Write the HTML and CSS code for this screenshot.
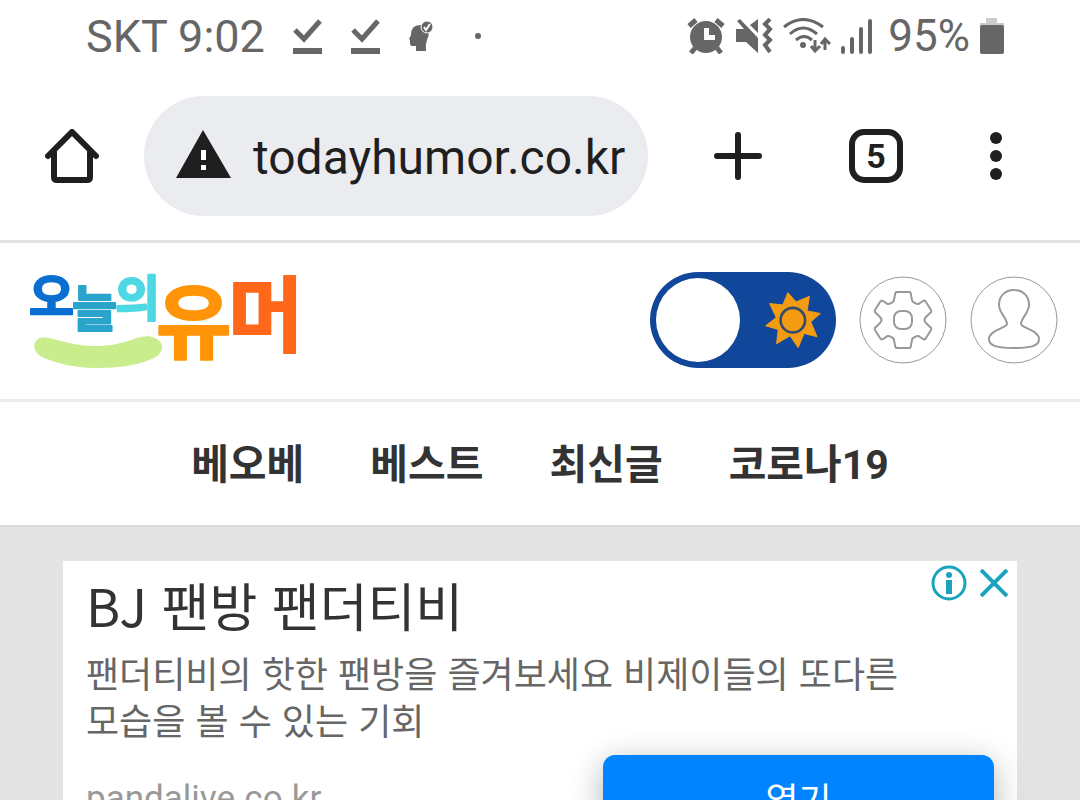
FILE: index.html
```
<!DOCTYPE html>
<html lang="ko">
<head>
	<meta charset="utf-8">
	<meta name="viewport" content="width=device-width, initial-scale=1">
	<title>오늘의유머</title>
	<link rel="stylesheet" href="styles.css">
</head>
<body>
<div class="status_bar">
	<div class="status_left">
		<span>SKT 9:02</span>
		<svg width="30" height="36" viewBox="0 0 30 36"><path d="M2 12l9 9L27 3" fill="none" stroke="#666" stroke-width="5"/><path d="M0 30h29v6H0z" fill="#666"/></svg>
		<svg width="30" height="36" viewBox="0 0 30 36"><path d="M2 12l9 9L27 3" fill="none" stroke="#666" stroke-width="5"/><path d="M0 30h29v6H0z" fill="#666"/></svg>
		<svg width="26" height="36" viewBox="0 0 26 36"><path d="M7 33v-5H3q-2 0-2-3v-3l-1-1 2-4Q2 7 11 7h5l4 6q0 5-2 9-2 5-1 11z" fill="#666"/><circle cx="18" cy="9" r="6" fill="#666" stroke="#fff" stroke-width="1"/><path d="M15 9l2 3 4-6" fill="none" stroke="#fff" stroke-width="2"/></svg>
		<i class="dot"></i>
	</div>
	<div class="status_right">
		<svg width="38" height="36" viewBox="0 0 38 36"><path d="M2 8l7-6M29 2l7 6M8 30l-4 5M30 30l4 5" stroke="#666" stroke-width="5"/><circle cx="19" cy="19" r="16" fill="#666"/><path d="M17 10h5v7h6v5H17z" fill="#fff"/></svg>
		<svg width="38" height="36" viewBox="0 0 38 36"><path d="M1 11h8L2 3l3-2 18 19v15L11 24H1zM15 7l8-6v14z" fill="#666"/><path d="M35 1l-5 5 5 5-5 6 5 5-5 5 5 7" fill="none" stroke="#666" stroke-width="4"/></svg>
		<svg width="48" height="36" viewBox="0 0 48 36"><path d="M1 9Q20-6 40 9M7 16Q20 4 34 16M13 22q8-7 16 0" fill="none" stroke="#666" stroke-width="3"/><circle cx="20" cy="27" r="3" fill="#666"/><path d="M32 22v11m-4-5l4 5 5-5M42 32V21m-4 5l4-5 5 5" fill="none" stroke="#666" stroke-width="3"/></svg>
		<svg width="31" height="36" viewBox="0 0 31 36"><path d="M2 30v4M11 21v13M20 11v23M29 3v31" stroke="#666" stroke-width="4" stroke-linecap="round"/></svg>
		<span class="battery_text">95%</span>
		<svg width="24" height="36" viewBox="0 0 24 36"><path d="M6 0h11v5h7v3H0V5h6z" fill="#ccc"/><rect y="7" width="24" height="29" rx="2" fill="#666"/></svg>
	</div>
</div>
<div class="toolbar">
	<button class="icon_button" aria-label="홈"><svg width="54" height="54" viewBox="0 0 54 54"><path d="M3 27L27 3l24 24M9 23v25q0 3 3 3h30q3 0 3-3V23" fill="none" stroke="#1f1f1f" stroke-width="6" stroke-linecap="round"/></svg></button>
	<div class="address">
		<svg width="55" height="54" viewBox="0 0 55 54"><path d="M27 0l28 48H0z" fill="#1f1f1f"/><path d="M25 20h5v10h-5zM25 35h5v5h-5z" fill="#fff"/></svg>
		<input type="text" class="url" value="todayhumor.co.kr" aria-label="주소">
	</div>
	<div class="actions">
		<button class="icon_button" aria-label="새 탭"><svg width="48" height="48" viewBox="0 0 48 48"><path d="M24 3v42M3 24h42" stroke="#1f1f1f" stroke-width="6" stroke-linecap="round"/></svg></button>
		<button class="tab_count">5</button>
		<button class="icon_button" aria-label="메뉴"><svg width="12" height="48" viewBox="0 0 12 48"><g fill="#1f1f1f"><circle cx="6" cy="6" r="6"/><circle cx="6" cy="24" r="6"/><circle cx="6" cy="42" r="6"/></g></svg></button>
	</div>
</div>
<header class="site_header">
	<a href="#" class="logo">
		<svg class="logo_image" width="280" height="104" viewBox="0 0 280 104">
			<path d="M10 71C4 75 5 84 14 89c16 7 34 11 54 11 24 0 42-3 56-9 12-5 14-16 3-21-6-3-14-2-24 2-22 8-44 7-62 3-14-3-24-8-31-4z" fill="#c9ec8c"/>
			<g class="logo_text">
				<text x="1" y="47" font-size="49" fill="#0a6fd0" stroke="#0a6fd0">오</text>
				<text x="44" y="59" font-size="49" fill="#2ba4cc" stroke="#2ba4cc">늘</text>
				<text x="87" y="48" font-size="49" fill="#4dd8e4" stroke="#4dd8e4">의</text>
				<text x="128" y="84" font-size="82" fill="#ff9408" stroke="#ff9408">유</text>
				<text x="200" y="77" font-size="82" fill="#ff681a" stroke="#ff681a">머</text>
			</g>
		</svg>
	</a>
	<div class="header_tools">
		<label class="theme_switch">
			<input type="checkbox" aria-label="다크 모드">
			<svg class="sun" width="58" height="58" viewBox="375 122 175 175"><path d="M447 127l25 28 40-17-7 44 40 8-29 25 19 45-39-10-18 43-24-36-41 24 5-43-38-11 32-25-20-42 40 4z" fill="#f39c12" stroke="#f39c12" stroke-width="3" stroke-linejoin="round"/><circle cx="462" cy="210" r="37" fill="#f39c12" stroke="#334c6c" stroke-width="8"/></svg>
		</label>
		<button class="icon_button" aria-label="설정"><svg width="88" height="88" viewBox="0 0 88 88"><g fill="none" stroke="#999"><circle cx="44" cy="44" r="43"/><path d="M38 16h12q2 0 2 3l1 5q0 2 3 3 3 2 5 0l3-2q2-1 3 1l5 8q1 2-1 3l-4 4q-3 3 0 6l4 4q2 1 1 3l-5 8q-1 2-3 1l-3-2q-2-2-5 0-3 1-3 3l-1 5q0 3-2 3H38q-2 0-2-3l-1-5q0-2-3-3-3-2-5 0l-3 2q-2 1-3-1l-5-8q-1-2 1-3l4-4q3-3 0-6l-4-4q-2-1-1-3l5-8q1-2 3-1l3 2q2 2 5 0 3-1 3-3l1-5q0-3 2-3z" stroke-width="2"/><rect x="35" y="35" width="18" height="18" rx="7" stroke-width="2"/></g></svg></button>
		<button class="icon_button" aria-label="내 정보"><svg width="88" height="88" viewBox="0 0 88 88"><g fill="none" stroke="#999"><circle cx="44" cy="44" r="43"/><path d="M44 14c-9 0-15 6-15 15 0 8 8 13 8 19 0 4-18 6-18 15 0 7 8 9 25 9s25-2 25-9c0-9-18-11-18-15 0-6 8-11 8-19 0-9-6-15-15-15z" stroke-width="2"/></g></svg></button>
	</div>
</header>
<nav class="menu">
	<a href="#">베오베</a>
	<a href="#">베스트</a>
	<a href="#">최신글</a>
	<a href="#">코로나19</a>
</nav>
<main class="content">
	<section class="ad">
		<div class="ad_top">
			<h2 class="ad_title">BJ 팬방 팬더티비</h2>
			<div class="ad_choices">
				<button class="icon_button" aria-label="광고 정보"><svg width="36" height="36" viewBox="0 0 36 36"><circle cx="18" cy="18" r="16" fill="none" stroke="#1aa3bd" stroke-width="3"/><circle cx="18" cy="10" r="3" fill="#1aa3bd"/><path d="M15 15h6v14h-6z" fill="#1aa3bd"/></svg></button>
				<button class="icon_button" aria-label="닫기"><svg width="28" height="28" viewBox="0 0 28 28"><path d="M1 1l26 26M27 1L1 27" stroke="#1aa3bd" stroke-width="4"/></svg></button>
			</div>
		</div>
		<p class="ad_text">팬더티비의 핫한 팬방을 즐겨보세요 비제이들의 또다른 모습을 볼 수 있는 기회</p>
		<div class="ad_bottom">
			<a href="#" class="ad_link">pandalive.co.kr</a>
			<button class="ad_open">열기</button>
		</div>
	</section>
</main>
</body>
</html>
```
FILE: styles.css
```
* {
	box-sizing: border-box;
}
body {
	margin: 0;
	background-color: #fff;
	font-family: Roboto, "Noto Sans CJK KR", sans-serif;
}
svg {
	display: block;
	flex: none;
}
button {
	cursor: pointer;
	font-family: inherit;
}
a {
	text-decoration: none;
}
.icon_button {
	display: block;
	padding: 0;
	border: none;
	background: none;
}
.status_bar {
	display: flex;
	justify-content: space-between;
	height: 72px;
	padding: 0 76px 0 86px;
	color: #666;
	font-size: 45px;
}
.status_left, .status_right {
	display: flex;
	align-items: center;
}
.status_left {
	gap: 28px;
}
.status_right {
	gap: 10px;
}
.battery_text {
	margin-left: 6px;
	font-size: 44px;
}
.dot {
	width: 6px;
	height: 6px;
	margin-left: 12px;
	border-radius: 50%;
	background-color: #666;
}
.toolbar {
	display: flex;
	align-items: center;
	padding: 24px 78px 24px 45px;
	border-bottom: 3px solid #e1e3e1;
}
.address {
	display: flex;
	flex: 1;
	align-items: center;
	gap: 22px;
	min-width: 0;
	height: 120px;
	margin: 0 66px 0 45px;
	padding: 2px 16px 0 32px;
	border-radius: 60px;
	background-color: #ebecf0;
}
.url {
	flex: 1;
	min-width: 0;
	padding: 0;
	border: none;
	outline: none;
	background: none;
	color: #1f1f1f;
	font-family: inherit;
	font-size: 48px;
}
.actions {
	display: flex;
	align-items: center;
	gap: 87px;
}
.tab_count {
	width: 54px;
	height: 54px;
	padding: 0;
	border: 6px solid #1f1f1f;
	border-radius: 15px;
	background: none;
	color: #1f1f1f;
	font-size: 34px;
	font-weight: 700;
	line-height: 40px;
}
.site_header {
	display: flex;
	align-items: center;
	justify-content: space-between;
	height: 159px;
	padding: 0 22px 2px 28px;
	border-bottom: 3px solid #eaeaea;
}
.logo_image {
	overflow: visible;
}
.logo_text {
	font-family: "Noto Sans CJK KR", sans-serif;
	font-weight: 700;
	stroke-width: 2px;
	stroke-linejoin: round;
}
.header_tools {
	display: flex;
	align-items: center;
	gap: 23px;
}
.theme_switch {
	position: relative;
	cursor: pointer;
}
.theme_switch input {
	display: block;
	appearance: none;
	width: 186px;
	height: 96px;
	margin: 0;
	padding: 6px;
	border-radius: 48px;
	background-color: #10479b;
}
.theme_switch input::before {
	content: "";
	display: block;
	width: 84px;
	height: 84px;
	border-radius: 50%;
	background-color: #fff;
}
.theme_switch input:checked::before {
	margin-left: auto;
}
.sun {
	position: absolute;
	top: 19px;
	right: 14px;
}
.menu {
	display: flex;
	justify-content: center;
	gap: 66px;
	padding: 34px 0 30px;
	font-size: 41px;
	font-weight: 700;
	line-height: 59px;
}
.menu a {
	color: #333;
}
.content {
	padding: 34px 63px;
	border-top: 2px solid #dcdcdc;
	background-color: #e4e4e4;
}
.ad {
	padding: 0 23px 36px;
	background-color: #fff;
	font-family: "Noto Sans CJK KR", sans-serif;
}
.ad_top {
	display: flex;
	justify-content: space-between;
}
.ad_title {
	margin: 0;
	padding-top: 6px;
	color: #333;
	font-size: 52px;
	font-weight: 400;
	line-height: 76px;
}
.ad_choices {
	display: flex;
	align-items: center;
	gap: 13px;
	height: 44px;
	margin-right: -14px;
}
.ad_text {
	max-width: 840px;
	margin: 6px 0 0;
	color: #666;
	font-size: 36px;
	line-height: 47px;
}
.ad_bottom {
	display: flex;
	justify-content: space-between;
	align-items: center;
	margin-top: 12px;
}
.ad_link {
	color: #999;
	font-family: Roboto, sans-serif;
	font-size: 35px;
}
.ad_open {
	width: 391px;
	height: 86px;
	border: none;
	border-radius: 12px;
	background-color: #0084ff;
	box-shadow: 0 8px 32px rgba(0, 0, 0, 0.3);
	color: #fff;
	font-size: 36px;
}
```
